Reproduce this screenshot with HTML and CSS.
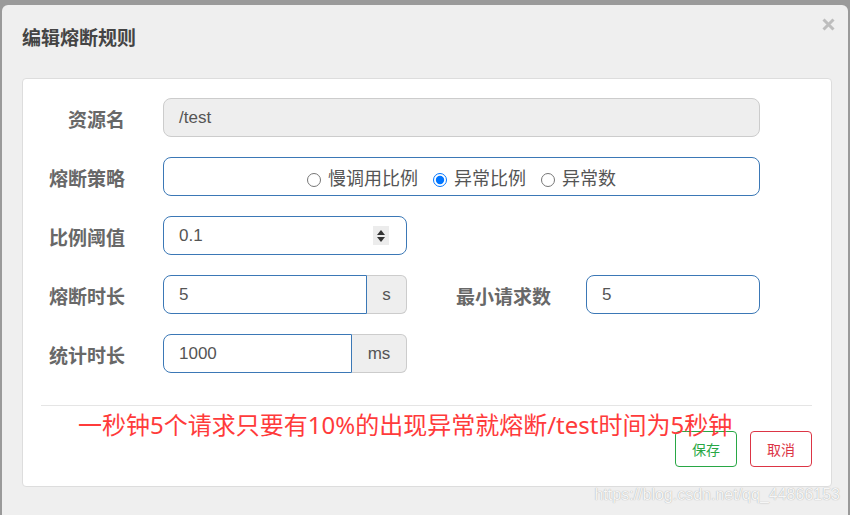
FILE: index.html
```html
<!DOCTYPE html>
<html lang="zh-CN">
<head>
  <meta charset="UTF-8" />
  <meta name="viewport" content="width=device-width, initial-scale=1.0"/>
  <title>编辑熔断规则</title>
  <link rel="stylesheet" href="styles.css">
</head>
<body>
  <div class="dialog">
    <div class="dialog-head">
      <h4 class="dialog-title">编辑熔断规则</h4>
      <span class="close">
        <svg width="13" height="13" viewBox="0 0 13 13"><path d="M1.5 1.5 L11.5 11.5 M11.5 1.5 L1.5 11.5" stroke="#bdbdbd" stroke-width="3" fill="none"/></svg>
      </span>
    </div>

    <div class="panel">
      <div class="row">
        <label class="row-label">资源名</label>
        <div class="field readonly w-full">/test</div>
      </div>
      <div class="row">
        <label class="row-label">熔断策略</label>
        <div class="field active w-full radios">
          <label class="radio"><input type="radio" name="grade">慢调用比例</label>
          <label class="radio"><input type="radio" name="grade" checked>异常比例</label>
          <label class="radio"><input type="radio" name="grade">异常数</label>
        </div>
      </div>
      <div class="row">
        <label class="row-label">比例阈值</label>
        <div class="field active w-half spin-field">
          <span>0.1</span>
          <span class="spinner"><i class="up"></i><i class="down"></i></span>
        </div>
      </div>
      <div class="row">
        <label class="row-label">熔断时长</label>
        <div class="group">
          <div class="field active group-input w-204">5</div>
          <div class="addon w-40">s</div>
        </div>
        <label class="row-label side-label">最小请求数</label>
        <div class="field active w-174">5</div>
      </div>
      <div class="row">
        <label class="row-label">统计时长</label>
        <div class="group">
          <div class="field active group-input w-189">1000</div>
          <div class="addon w-55">ms</div>
        </div>
      </div>

      <div class="panel-foot">
        <p class="note">一秒钟5个请求只要有10%的出现异常就熔断/test时间为5秒钟</p>
        <button class="btn btn-save">保存</button>
        <button class="btn btn-cancel">取消</button>
      </div>
    </div>

    <div class="watermark">https://blog.csdn.net/qq_44866153</div>
  </div>
</body>
</html>
```

FILE: styles.css
```css
body {
  margin: 0;
  background: #9a9a9a;
  font-family: "Liberation Sans", "Noto Sans CJK SC", sans-serif;
  overflow: hidden;
}
.dialog {
  position: relative;
  margin: 5px 2px 0;
  height: 515px;
  padding: 0 16px 0 20px;
  background: #efefef;
  border-radius: 6px 6px 0 0;
}
.dialog-head {
  height: 73px;
}
.dialog-title {
  margin: 0;
  padding-top: 22px;
  font-size: 19px;
  line-height: 24px;
  font-weight: bold;
  color: #444;
}
.close {
  position: absolute;
  top: 13px;
  right: 13px;
  width: 13px;
  height: 13px;
}
.close svg {
  display: block;
}
.panel {
  background: #fff;
  border: 1px solid #ddd;
  border-radius: 4px;
  padding: 19px 0 19px;
}
.row {
  display: flex;
  align-items: flex-start;
  height: 39px;
  margin-bottom: 20px;
}
.row-label {
  flex: none;
  width: 102px;
  margin-right: 38px;
  text-align: right;
  font-size: 19px;
  line-height: 45px;
  font-weight: bold;
  color: #686868;
}
.side-label {
  width: 144px;
  margin-right: 35px;
}
.field {
  box-sizing: border-box;
  height: 39px;
  padding: 0 15px;
  border: 1px solid #ccc;
  border-radius: 8px;
  font-size: 17px;
  line-height: 37px;
  color: #555;
}
.field.readonly {
  background: #eee;
}
.field.active {
  border-color: #3b78b6;
}
.w-full { width: 597px; }
.w-half { width: 244px; }
.w-204 { width: 204px; }
.w-189 { width: 189px; }
.w-174 { width: 174px; }
.w-40 { width: 40px; }
.w-55 { width: 55px; }
.radios {
  display: flex;
  justify-content: center;
  gap: 15px;
  padding-top: 6px;
  font-size: 18px;
}
.radio {
  display: flex;
  align-items: center;
}
.radio input {
  width: 14px;
  height: 14px;
  margin: 0 7px 0 0;
}
.spin-field {
  display: flex;
  align-items: center;
  justify-content: space-between;
  padding-right: 17px;
}
.spinner {
  display: flex;
  flex-direction: column;
  align-items: center;
  justify-content: center;
  gap: 2px;
  width: 16px;
  height: 19px;
  background: #ececec;
}
.spinner i {
  width: 0;
  height: 0;
  border-left: 4px solid transparent;
  border-right: 4px solid transparent;
}
.spinner .up { border-bottom: 5px solid #333; }
.spinner .down { border-top: 5px solid #333; }
.group {
  display: flex;
}
.group-input {
  border-radius: 8px 0 0 8px;
}
.addon {
  box-sizing: border-box;
  height: 39px;
  background: #eee;
  border: 1px solid #ccc;
  border-left: none;
  border-radius: 0 6px 6px 0;
  text-align: center;
  font-size: 17px;
  line-height: 37px;
  color: #555;
}
.panel-foot {
  position: relative;
  display: flex;
  justify-content: flex-end;
  gap: 13px;
  margin: 32px 19px 0 18px;
  padding-top: 25px;
  border-top: 1px solid #e5e5e5;
}
.note {
  position: absolute;
  left: 37px;
  top: 4px;
  margin: 0;
  font-family: "Noto Sans", "Noto Sans CJK SC", sans-serif;
  font-size: 24px;
  line-height: 30px;
  color: #ff3b3b;
  white-space: nowrap;
}
.btn {
  width: 62px;
  height: 36px;
  padding: 0;
  background: #fff;
  border: 1px solid;
  border-radius: 4px;
  font-family: "Noto Sans CJK SC", sans-serif;
  font-size: 14px;
}
.btn-save {
  color: #28a745;
  border-color: #28a745;
}
.btn-cancel {
  color: #dc3545;
  border-color: #dc3545;
}
.watermark {
  position: absolute;
  top: 481px;
  right: 8px;
  font-size: 16px;
  color: #f6f6f6;
  text-shadow: 0 0 1px #999;
}
```
